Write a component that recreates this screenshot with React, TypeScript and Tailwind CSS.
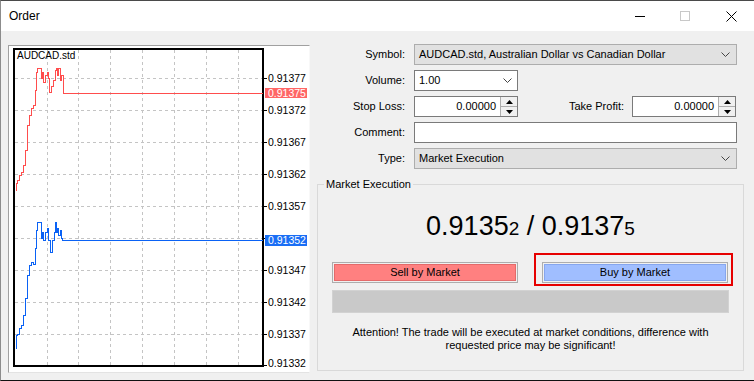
import React from 'react';

// price chart: coordinates are page pixels, the viewBox starts at the panel's inner corner
const redPts: [number, number][] = [
  [15, 190], [16, 183], [17, 180], [19, 175], [21, 172], [23, 165], [25, 150], [27, 125],
  [29, 115], [31, 108], [33, 105], [35, 90], [36, 72], [37, 68], [39, 68], [41, 78],
  [42, 72], [43, 82], [45, 75], [47, 72], [48, 78], [49, 92], [51, 86], [53, 80],
  [55, 70], [56, 68], [57, 75], [58, 68], [60, 80], [61, 75], [63, 92], [63, 93], [262, 93],
];

const bluePts: [number, number][] = [
  [15, 348], [16, 335], [17, 334], [19, 328], [21, 325], [23, 315], [25, 298], [27, 275],
  [29, 265], [31, 262], [33, 264], [35, 248], [36, 230], [37, 222], [39, 222], [41, 238],
  [42, 232], [43, 240], [45, 232], [47, 228], [48, 240], [50, 252], [52, 240], [54, 232],
  [55, 222], [56, 232], [57, 228], [58, 235], [60, 230], [61, 238], [62, 240], [262, 240],
];

// step-like line, the way the terminal draws ticks
const stepPath = (pts: [number, number][]) =>
  pts.map((p, i) => (i === 0 ? `M${p[0]} ${p[1]}` : `H${p[0]} V${p[1]}`)).join(' ');

const vGrid = [47, 78, 110, 142, 174, 206, 238];
const hGrid = [
  { y: 78, label: '0.91377' },
  { y: 110, label: '0.91372' },
  { y: 142, label: '0.91367' },
  { y: 174, label: '0.91362' },
  { y: 206, label: '0.91357' },
  { y: 238, label: '' }, // hidden under the bid tag
  { y: 270, label: '0.91347' },
  { y: 302, label: '0.91342' },
  { y: 334, label: '0.91337' },
];

const axisFont = 'Liberation Sans, Arial, sans-serif';

function Chart() {
  return (
    <div className="mt-[1px] w-[302px] h-[328px] border border-t-[#a0a0a0] border-l-[#a0a0a0] border-r-[#f8f8f8] border-b-[#e3e3e3] bg-white">
      <svg width={300} height={326} viewBox="9 46 300 326" className="block">
        {vGrid.map((x) => (
          <line key={x} x1={x + 0.5} y1={50} x2={x + 0.5} y2={366} stroke="#c4c4c4" strokeDasharray="3 3" />
        ))}
        {hGrid.map((g) => (
          <line key={g.y} x1={15} y1={g.y + 0.5} x2={262} y2={g.y + 0.5} stroke="#c4c4c4" strokeDasharray="3 3" />
        ))}
        <rect x={14} y={49} width={249} height={317} fill="none" stroke="#000" strokeWidth={2} />
        {hGrid.map((g) => (
          <g key={g.y}>
            <line x1={263} y1={g.y + 0.5} x2={267} y2={g.y + 0.5} stroke="#000" />
            {g.label && (
              <text x={268} y={g.y + 4} fontSize="10.5" fill="#000" fontFamily={axisFont}>
                {g.label}
              </text>
            )}
          </g>
        ))}
        <line x1={263} y1={365.5} x2={267} y2={365.5} stroke="#000" />
        <text x={268} y={367} fontSize="10.5" fill="#000" fontFamily={axisFont}>0.91332</text>

        <path d={stepPath(redPts)} fill="none" stroke="#ff4d4d" strokeWidth={1} shapeRendering="crispEdges" transform="translate(0.5 0.5)" />
        <path d={stepPath(bluePts)} fill="none" stroke="#0a62f5" strokeWidth={1} shapeRendering="crispEdges" transform="translate(0.5 0.5)" />

        <rect x={265} y={88} width={42} height={10} fill="#ff6666" />
        <text x={268} y={97} fontSize="10.5" fill="#fff" fontFamily={axisFont}>0.91375</text>
        <rect x={265} y={235} width={42} height={11} fill="#1a6ef5" />
        <text x={268} y={244} fontSize="10.5" fill="#fff" fontFamily={axisFont}>0.91352</text>

        <text x={17} y={59} fontSize="10" fill="#000" fontFamily={axisFont}>AUDCAD.std</text>
      </svg>
    </div>
  );
}

function Chevron() {
  return (
    <svg width="9" height="5" viewBox="0 0 9 5" className="shrink-0">
      <polyline points="0.5,0.5 4.5,4.5 8.5,0.5" fill="none" stroke="#444" strokeWidth="1" />
    </svg>
  );
}

function Spinner() {
  return (
    <div className="w-[17px] h-full flex flex-col border-l border-[#adadad] bg-[#f0f0f0]">
      <div className="flex-1 flex items-center justify-center border-b border-[#adadad]">
        <svg width="7" height="4" viewBox="0 0 7 4"><polygon points="3.5,0 7,4 0,4" fill="#000" /></svg>
      </div>
      <div className="flex-1 flex items-center justify-center">
        <svg width="7" height="4" viewBox="0 0 7 4"><polygon points="0,0 7,0 3.5,4" fill="#000" /></svg>
      </div>
    </div>
  );
}

function Label({ children }: { children: React.ReactNode }) {
  return <div className="w-[95px] text-right mr-[9px]">{children}</div>;
}

export default function App() {
  return (
    <div className="w-[754px] h-[381px] flex flex-col overflow-hidden bg-[#f0f0f0] border-t border-t-[#4a4a4a] border-l border-l-[#8c8c8c] border-b border-b-[#111] font-['Liberation_Sans',Arial,sans-serif] text-[11px] text-black">
      {/* title bar */}
      <div className="h-[30px] shrink-0 bg-white flex items-center pl-[8px] text-[12px]">
        <span>Order</span>
        <div className="ml-auto flex items-center">
          <svg width="10" height="10" viewBox="0 0 10 10" className="mr-[35px]"><line x1="0" y1="5.5" x2="10" y2="5.5" stroke="#000" /></svg>
          <svg width="10" height="10" viewBox="0 0 10 10" className="mr-[36px]"><rect x="0.5" y="0.5" width="9" height="9" fill="none" stroke="#c8c8c8" /></svg>
          <svg width="11" height="11" viewBox="0 0 11 11" className="mr-[17px]">
            <line x1="0.5" y1="0.5" x2="10.5" y2="10.5" stroke="#000" />
            <line x1="10.5" y1="0.5" x2="0.5" y2="10.5" stroke="#000" />
          </svg>
        </div>
      </div>

      {/* body */}
      <div className="flex-1 flex pl-[7px] pt-[13px]">
        <Chart />

        <div className="flex-1 flex flex-col">
          <div className="flex items-center h-[21px]">
            <Label>Symbol:</Label>
            <div className="w-[323px] h-full bg-[#e1e1e1] border border-[#adadad] flex items-center pl-[4px] pr-[6px]">
              <span className="flex-1">AUDCAD.std, Australian Dollar vs Canadian Dollar</span>
              <Chevron />
            </div>
          </div>

          <div className="flex items-center h-[21px] mt-[5px]">
            <Label>Volume:</Label>
            <div className="w-[104px] h-full bg-white border border-[#7a7a7a] flex items-center pl-[4px] pr-[5px]">
              <span className="flex-1">1.00</span>
              <Chevron />
            </div>
          </div>

          <div className="flex items-center h-[21px] mt-[5px]">
            <Label>Stop Loss:</Label>
            <div className="w-[104px] h-full bg-white border border-[#7a7a7a] flex items-stretch">
              <span className="flex-1 text-right pr-[4px] self-center">0.00000</span>
              <Spinner />
            </div>
            <div className="flex-1 text-right pr-[8px]">Take Profit:</div>
            <div className="w-[104px] h-full bg-white border border-[#7a7a7a] flex items-stretch mr-[18px]">
              <span className="flex-1 text-right pr-[4px] self-center">0.00000</span>
              <Spinner />
            </div>
          </div>

          <div className="flex items-center h-[21px] mt-[5px]">
            <Label>Comment:</Label>
            <div className="w-[323px] h-full bg-white border border-[#7a7a7a]" />
          </div>

          <div className="flex items-center h-[21px] mt-[5px]">
            <Label>Type:</Label>
            <div className="w-[323px] h-full bg-[#e1e1e1] border border-[#adadad] flex items-center pl-[4px] pr-[6px]">
              <span className="flex-1">Market Execution</span>
              <Chevron />
            </div>
          </div>

          {/* group box */}
          <div className="relative mt-[15px] ml-[7px] w-[427px] h-[187px] border border-[#d9d9d9] flex flex-col">
            <span className="absolute left-[6px] top-[-8px] px-[2px] bg-[#f0f0f0] leading-[14px]">Market Execution</span>

            <div className="mt-[26px] text-center text-[27px] leading-[30px]">
              0.9135<span className="text-[19px]">2</span> / 0.9137<span className="text-[19px]">5</span>
            </div>

            <div className="mt-[18px] px-[14px] flex gap-[24px]">
              <div className="w-[186px] h-[21px] border border-[#adadad] p-[1px]">
                <div className="h-full bg-[#ff8080] border border-[#e46a6a] flex items-center justify-center">Sell by Market</div>
              </div>
              <div className="w-[186px] h-[21px] border border-[#adadad] p-[1px]">
                <div className="h-full bg-[#a0beff] border border-[#86a6ee] flex items-center justify-center">Buy by Market</div>
              </div>
            </div>

            <div className="mt-[7px] mx-[14px] h-[23px] bg-[#c9c9c9] border border-[#d2d2d2]" />

            <div className="mt-[13px] text-center leading-[13px]">
              Attention! The trade will be executed at market conditions, difference with
              <br />
              requested price may be significant!
            </div>

            {/* highlight frame around the buy button */}
            <div className="absolute left-[216px] top-[68px] w-[199px] h-[33px] border-2 border-[#e60000]" />
          </div>
        </div>
      </div>
    </div>
  );
}
